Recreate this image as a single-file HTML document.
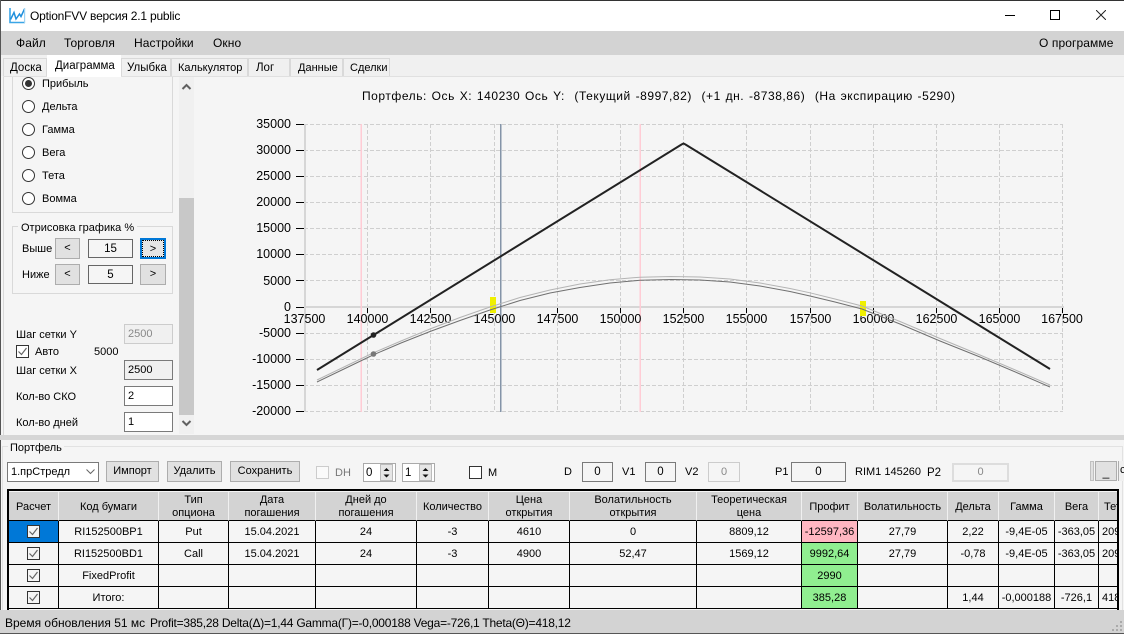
<!DOCTYPE html>
<html><head><meta charset="utf-8"><style>
html,body{margin:0;padding:0;background:#f5f5f5}
#w{position:relative;width:1124px;height:634px;overflow:hidden;background:#f5f5f5;font:11px/14px "Liberation Sans",sans-serif;color:#000}
#w div,#w span{position:absolute;box-sizing:border-box}
.t{white-space:nowrap}
.m{font-size:12px;letter-spacing:.1px}
.tab{top:58px;height:18px;background:#f0f0f0;border:1px solid #d9d9d9;border-bottom:0;line-height:18px;font-size:11.5px;white-space:nowrap}
.r{left:22px;width:13px;height:13px;border:1px solid #333;border-radius:50%;background:#fff}
.b{background:#e1e1e1;border:1px solid #adadad;text-align:center;line-height:18px}
.x{border:1px solid #7a7a7a;background:#f5f5f5;text-align:center;line-height:18px;font-size:11.5px}
.d{border:1px solid #ccc;background:#f0f0f0;color:#888;text-align:center;line-height:18px}
.c{width:13px;height:13px;border:1px solid #333;background:#fff}
table{position:absolute;left:0;top:0;border-collapse:separate;border-spacing:0;table-layout:fixed;width:1150px;font:11px/13px "Liberation Sans",sans-serif}
td{box-sizing:border-box;border-right:1px solid #000;border-bottom:1px solid #000;padding:2px 0 0;text-align:center;height:22px;background:#f5f5f5;white-space:nowrap;overflow:hidden;position:relative}
tr.h td{height:29px;background:#d3d3d3;border-right:1px solid #f0f0f0;border-bottom:1px solid #000;font-size:11px;line-height:13px}
td.g{background:#90ee90}td.p{background:#ffb6c1}td.s{background:#0078d7}
td svg{display:block;margin:-2px auto 0}
</style></head><body><div id="w">

<div style="left:0;top:0;width:1124px;height:31px;background:#fff;border-top:1px solid #333"></div>
<svg style="position:absolute;left:9px;top:7px" width="17" height="17" viewBox="0 0 17 17"><path d="M1 1V15.5H16" fill="none" stroke="#3aa5e6" stroke-width="1.6"/><path d="M1.5 12.5L5 5.5L7 12L10.5 7L12 9.5L15.5 2" fill="none" stroke="#1f8fdc" stroke-width="1.5"/><rect x="15" y="1" width="1.2" height="15" fill="#9fd3f2"/></svg>
<span class="t" style="left:30px;top:9px;font-size:12px;letter-spacing:-.2px">OptionFVV версия 2.1 public</span>
<div style="left:1005px;top:15px;width:10px;height:1px;background:#000"></div>
<div style="left:1050px;top:10px;width:10px;height:10px;border:1px solid #000"></div>
<svg style="position:absolute;left:1096px;top:10px" width="10" height="10"><path d="M0 0L10 10M10 0L0 10" stroke="#222" stroke-width="1"/></svg>

<div style="left:0;top:31px;width:1124px;height:24px;background:#d3d3d3"></div>
<span class="t m" style="left:16px;top:36px">Файл</span>
<span class="t m" style="left:64px;top:36px">Торговля</span>
<span class="t m" style="left:134px;top:36px">Настройки</span>
<span class="t m" style="left:213px;top:36px">Окно</span>
<span class="t m" style="left:1039px;top:36px">О программе</span>

<div style="left:0;top:55px;width:1124px;height:21px;background:#f0f0f0"></div>
<div style="left:3px;top:76px;width:1121px;height:1px;background:#e0e0e0"></div>
<div class="tab" style="left:3px;width:44px;padding-left:6px">Доска</div>
<div class="tab" style="left:121px;width:50px;padding-left:5px">Улыбка</div>
<div class="tab" style="left:171px;width:77px;padding-left:6px;font-size:11px">Калькулятор</div>
<div class="tab" style="left:248px;width:42px;padding-left:7px">Лог</div>
<div class="tab" style="left:290px;width:53px;padding-left:7px;font-size:11px">Данные</div>
<div class="tab" style="left:343px;width:47px;padding-left:6px;font-size:11px">Сделки</div>
<div class="tab" style="left:47px;top:55px;width:74px;height:22px;background:#fff;border:0;line-height:22px;padding-left:8px">Диаграмма</div>

<div style="left:0;top:0;width:1px;height:634px;background:#555"></div>
<div style="left:3px;top:77px;width:1px;height:358px;background:#d9d9d9"></div>
<div style="left:12px;top:77px;width:161px;height:136px;border:1px solid #d9d9d9;border-top:0"></div>

<div class="r" style="top:77px"></div><div style="left:25px;top:80px;width:7px;height:7px;border-radius:50%;background:#333"></div>
<span class="t" style="left:42px;top:77px">Прибыль</span>
<div class="r" style="top:100px"></div><span class="t" style="left:42px;top:100px">Дельта</span>
<div class="r" style="top:123px"></div><span class="t" style="left:42px;top:123px">Гамма</span>
<div class="r" style="top:146px"></div><span class="t" style="left:42px;top:146px">Вега</span>
<div class="r" style="top:169px"></div><span class="t" style="left:42px;top:169px">Тета</span>
<div class="r" style="top:192px"></div><span class="t" style="left:42px;top:192px">Вомма</span>

<div style="left:12px;top:226px;width:161px;height:68px;border:1px solid #d9d9d9"></div>
<span class="t" style="left:18px;top:221px;background:#f5f5f5;padding:0 3px">Отрисовка графика %</span>
<span class="t" style="left:22px;top:242px">Выше</span>
<div class="b" style="left:55px;top:238px;width:25px;height:21px">&lt;</div>
<div class="x" style="left:88px;top:239px;width:45px;height:19px;border-color:#666">15</div>
<div class="b" style="left:140px;top:238px;width:26px;height:21px;border:2px solid #0078d7;background:#e5e5e5;line-height:17px"><span style="left:0;top:0;right:0;bottom:0;border:1px dotted #000">&gt;</span></div>
<span class="t" style="left:22px;top:268px">Ниже</span>
<div class="b" style="left:55px;top:264px;width:25px;height:21px">&lt;</div>
<div class="x" style="left:88px;top:265px;width:45px;height:19px;border-color:#666">5</div>
<div class="b" style="left:140px;top:264px;width:26px;height:21px">&gt;</div>

<span class="t" style="left:16px;top:328px">Шаг сетки Y</span>
<div class="d" style="left:124px;top:324px;width:49px;height:20px;text-align:left;padding-left:3px">2500</div>
<div class="c" style="left:16px;top:345px"></div>
<svg style="position:absolute;left:16px;top:345px" width="13" height="13"><path d="M2.5 6.5L5.5 9.5L10.5 3" fill="none" stroke="#666" stroke-width="1.2"/></svg>
<span class="t" style="left:35px;top:345px">Авто</span>
<span class="t" style="left:94px;top:345px">5000</span>
<span class="t" style="left:16px;top:364px">Шаг сетки X</span>
<div class="x" style="left:124px;top:360px;width:49px;height:20px;background:#f0f0f0;text-align:left;padding-left:3px;font-size:11px">2500</div>
<span class="t" style="left:16px;top:390px">Кол-во СКО</span>
<div class="x" style="left:124px;top:386px;width:49px;height:20px;background:#fff;text-align:left;padding-left:3px;font-size:11px">2</div>
<span class="t" style="left:16px;top:416px">Кол-во дней</span>
<div class="x" style="left:124px;top:412px;width:49px;height:20px;background:#fff;text-align:left;padding-left:3px;font-size:11px">1</div>

<div style="left:179px;top:77px;width:15px;height:357px;background:#f0f0f0"></div>
<div style="left:179px;top:198px;width:15px;height:217px;background:#c8c8c8"></div>
<svg style="position:absolute;left:179px;top:80px" width="15" height="350"><path d="M3.5 9L7.5 5L11.5 9" fill="none" stroke="#606060" stroke-width="2"/><path d="M3.5 341L7.5 345L11.5 341" fill="none" stroke="#606060" stroke-width="2"/></svg>

<svg style="position:absolute;left:194px;top:77px" width="930" height="357" viewBox="194 77 930 357" font-family="Liberation Sans" font-size="12.5">
<g stroke="#cfcfcf" stroke-width="1" stroke-dasharray="4 2" fill="none">
<path d="M304 124.5H1063M304 150.5H1063M304 176.5H1063M304 202.5H1063M304 228.5H1063M304 254.5H1063M304 280.5H1063M304 333.5H1063M304 359.5H1063M304 385.5H1063M304 411.5H1063"/>
<path d="M367.5 124V411M430.5 124V411M494.5 124V411M557.5 124V411M620.5 124V411M683.5 124V411M746.5 124V411M810.5 124V411M873.5 124V411M936.5 124V411M999.5 124V411M1062.5 124V411"/>
</g>
<rect x="304" y="124" width="2" height="288" fill="#d6d6d6"/>
<rect x="304" y="306" width="760" height="2" fill="#d6d6d6"/>
<g stroke="#000" stroke-width="1"><path d="M296 124.5H304M296 150.5H304M296 176.5H304M296 202.5H304M296 228.5H304M296 254.5H304M296 280.5H304M296 307.5H304M296 333.5H304M296 359.5H304M296 385.5H304M296 411.5H304"/>
<path d="M367.5 308V313M430.5 308V313M494.5 308V313M557.5 308V313M620.5 308V313M683.5 308V313M746.5 308V313M810.5 308V313M873.5 308V313M936.5 308V313M999.5 308V313M1062.5 308V313"/></g>
<rect x="360.5" y="124" width="1.5" height="288" fill="#ffccd5"/>
<rect x="639.5" y="124" width="1.5" height="288" fill="#ffccd5"/>
<rect x="500" y="124" width="1.5" height="288" fill="#8494a8"/>
<g text-anchor="end"><text x="291" y="128">35000</text><text x="291" y="154">30000</text><text x="291" y="180">25000</text><text x="291" y="206">20000</text><text x="291" y="232">15000</text><text x="291" y="258">10000</text><text x="291" y="285">5000</text><text x="291" y="311">0</text><text x="291" y="337">-5000</text><text x="291" y="363">-10000</text><text x="291" y="389">-15000</text><text x="291" y="415">-20000</text></g>
<g text-anchor="middle"><text x="304.5" y="323">137500</text><text x="367.5" y="323">140000</text><text x="430.5" y="323">142500</text><text x="494.5" y="323">145000</text><text x="557.5" y="323">147500</text><text x="620.5" y="323">150000</text><text x="683.5" y="323">152500</text><text x="746.5" y="323">155000</text><text x="810.5" y="323">157500</text><text x="873.5" y="323">160000</text><text x="936.5" y="323">162500</text><text x="999.5" y="323">165000</text><text x="1062" y="323">167500</text></g>
<rect x="490" y="297" width="6" height="16" fill="#f0f000"/>
<rect x="860" y="301" width="6" height="15" fill="#f0f000"/>
<polyline fill="none" stroke="#b4b4b4" stroke-width="1" points="317,380 345,366.5 373,353 401,341 430,329 460,317.5 490,307 520,297.5 550,290 580,284 610,279.7 640,277.2 671,276.5 700,277 730,279 760,283 790,288.5 810,292.8 835,299 862,306 900,321.5 940,338.5 980,355 1020,372 1050,385"/>
<polyline fill="none" stroke="#707070" stroke-width="1" points="317,382 345,368.5 373,355 401,343 430,331.5 460,320.5 490,310 520,300.5 550,293 580,287.5 610,283 640,280.3 671,279.5 700,280 730,282 760,286 790,291.5 810,296 835,302 862,309 900,324 940,341 980,357 1020,374 1050,387"/>
<polyline fill="none" stroke="#222" stroke-width="2" points="317,370 681.5,144.5 683.5,143.5 685.5,144.5 1050,369"/>
<circle cx="373.5" cy="335" r="2.8" fill="#222"/>
<circle cx="373.5" cy="354" r="2.8" fill="#777"/>
</svg>
<span class="t" style="left:362px;top:89px;font-size:12px;letter-spacing:.55px;word-spacing:.9px;white-space:pre">Портфель: Ось X: 140230 Ось Y:  (Текущий -8997,82)  (+1 дн. -8738,86)  (На экспирацию -5290)</span>

<div style="left:0;top:435px;width:1124px;height:5px;background:#d6d6d6"></div>
<div style="left:2px;top:446px;width:1121px;height:170px;border:1px solid #e2e2e2;border-bottom:0"></div>
<span class="t" style="left:8px;top:441px;background:#f5f5f5;padding:0 2px">Портфель</span>

<div style="left:7px;top:462px;width:92px;height:20px;border:1px solid #7a7a7a;background:#fff;line-height:18px;padding-left:3px">1.прСтредл</div>
<svg style="position:absolute;left:86px;top:469px" width="9" height="6"><path d="M0.5 0.5L4.5 4.5L8.5 0.5" fill="none" stroke="#666"/></svg>
<div class="b" style="left:106px;top:461px;width:53px;height:21px">Импорт</div>
<div class="b" style="left:167px;top:461px;width:55px;height:21px">Удалить</div>
<div class="b" style="left:230px;top:461px;width:70px;height:21px">Сохранить</div>
<div class="c" style="left:316px;top:466px;border-color:#ccc;background:#fafafa"></div>
<span class="t" style="left:335px;top:466px;color:#777">DH</span>
<div class="x" style="left:363px;top:463px;width:33px;height:19px;background:#fff;border-color:#aaa;text-align:left;padding-left:2px">0</div>
<div style="left:380px;top:464px;width:13px;height:17px;background:#e6e6e6;border:1px solid #bbb"></div>
<svg style="position:absolute;left:380px;top:464px" width="13" height="17"><path d="M3.5 7H9.5L6.5 4ZM3.5 10.5H9.5L6.5 13.5Z" fill="#111"/></svg>
<div class="x" style="left:402px;top:463px;width:33px;height:19px;background:#fff;border-color:#aaa;text-align:left;padding-left:2px">1</div>
<div style="left:419px;top:464px;width:13px;height:17px;background:#e6e6e6;border:1px solid #bbb"></div>
<svg style="position:absolute;left:419px;top:464px" width="13" height="17"><path d="M3.5 7H9.5L6.5 4ZM3.5 10.5H9.5L6.5 13.5Z" fill="#111"/></svg>
<div class="c" style="left:469px;top:466px"></div>
<span class="t" style="left:488px;top:466px">M</span>
<span class="t" style="left:564px;top:465px">D</span>
<div class="x" style="left:582px;top:462px;width:31px;height:20px">0</div>
<span class="t" style="left:622px;top:465px">V1</span>
<div class="x" style="left:645px;top:462px;width:31px;height:20px">0</div>
<span class="t" style="left:685px;top:465px">V2</span>
<div class="d" style="left:708px;top:462px;width:32px;height:20px;background:#f5f5f5">0</div>
<span class="t" style="left:775px;top:465px">P1</span>
<div class="x" style="left:791px;top:462px;width:55px;height:20px">0</div>
<span class="t" style="left:855px;top:465px">RIM1 145260</span>
<span class="t" style="left:927px;top:466px;font-size:11.5px">P2</span>
<div class="d" style="left:952px;top:463px;width:57px;height:19px;background:#f5f5f5;border-width:2px;border-color:#ddd;line-height:15px">0</div>
<div style="left:1090px;top:461px;width:4px;height:20px;background:#e1e1e1;border:1px solid #c0c0c0"></div>
<div class="b" style="left:1095px;top:461px;width:22px;height:20px;line-height:20px;font-size:12px">_</div>
<div style="left:1118px;top:461px;width:6px;height:20px;background:#f0f0f0;border-left:1px solid #adadad;overflow:hidden;line-height:18px;padding-left:1px">с</div>

<div style="left:7px;top:489px;width:1112px;height:121px;background:#f5f5f5;border:2px solid #000;border-bottom:0;overflow:hidden">
<div style="left:0;top:1px;width:1108px;height:119px;overflow:hidden">
<table>
<colgroup><col style="width:50px"><col style="width:100px"><col style="width:70px"><col style="width:87px"><col style="width:101px"><col style="width:72px"><col style="width:81px"><col style="width:127px"><col style="width:105px"><col style="width:56px"><col style="width:90px"><col style="width:51px"><col style="width:56px"><col style="width:44px"><col style="width:60px"></colgroup>
<tr class="h"><td>Расчет</td><td>Код бумаги</td><td>Тип<br>опциона</td><td>Дата<br>погашения</td><td>Дней до<br>погашения</td><td>Количество</td><td>Цена<br>открытия</td><td>Волатильность<br>открытия</td><td>Теоретическая<br>цена</td><td>Профит</td><td>Волатильность</td><td>Дельта</td><td>Гамма</td><td>Вега</td><td style="text-align:left;padding-left:5px">Тета</td></tr>
<tr><td class="s"><svg width="13" height="13"><rect x=".5" y=".5" width="12" height="12" fill="#f5f5f5" stroke="#333"/><path d="M2.5 6.5L5.5 9.5L10.5 3" fill="none" stroke="#666" stroke-width="1.2"/></svg></td><td>RI152500BP1</td><td>Put</td><td>15.04.2021</td><td>24</td><td>-3</td><td>4610</td><td>0</td><td>8809,12</td><td class="p">-12597,36</td><td>27,79</td><td>2,22</td><td>-9,4E-05</td><td>-363,05</td><td style="text-align:left;padding-left:3px">209,06</td></tr>
<tr><td><svg width="13" height="13"><rect x=".5" y=".5" width="12" height="12" fill="#f5f5f5" stroke="#333"/><path d="M2.5 6.5L5.5 9.5L10.5 3" fill="none" stroke="#666" stroke-width="1.2"/></svg></td><td>RI152500BD1</td><td>Call</td><td>15.04.2021</td><td>24</td><td>-3</td><td>4900</td><td>52,47</td><td>1569,12</td><td class="g">9992,64</td><td>27,79</td><td>-0,78</td><td>-9,4E-05</td><td>-363,05</td><td style="text-align:left;padding-left:3px">209,06</td></tr>
<tr><td><svg width="13" height="13"><rect x=".5" y=".5" width="12" height="12" fill="#f5f5f5" stroke="#333"/><path d="M2.5 6.5L5.5 9.5L10.5 3" fill="none" stroke="#666" stroke-width="1.2"/></svg></td><td>FixedProfit</td><td></td><td></td><td></td><td></td><td></td><td></td><td></td><td class="g">2990</td><td></td><td></td><td></td><td></td><td></td></tr>
<tr><td><svg width="13" height="13"><rect x=".5" y=".5" width="12" height="12" fill="#f5f5f5" stroke="#333"/><path d="M2.5 6.5L5.5 9.5L10.5 3" fill="none" stroke="#666" stroke-width="1.2"/></svg></td><td>Итого:</td><td></td><td></td><td></td><td></td><td></td><td></td><td></td><td class="g">385,28</td><td></td><td>1,44</td><td>-0,000188</td><td>-726,1</td><td style="text-align:left;padding-left:3px">418,12</td></tr>
</table>
</div></div>

<div style="left:0;top:610px;width:1124px;height:23px;background:#d3d3d3"></div>
<div style="left:0;top:633px;width:1124px;height:1px;background:#555"></div>
<span class="t" style="left:5px;top:616px;font-size:12px">Время обновления 51 мс</span>
<span class="t" style="left:150px;top:616px;font-size:12px;letter-spacing:-.23px">Profit=385,28 Delta(Δ)=1,44 Gamma(Γ)=-0,000188 Vega=-726,1 Theta(Θ)=418,12</span>
<svg style="position:absolute;left:1111px;top:620px" width="12" height="12" fill="#aaa"><rect x="9" y="1" width="2" height="2"/><rect x="5" y="5" width="2" height="2"/><rect x="9" y="5" width="2" height="2"/><rect x="1" y="9" width="2" height="2"/><rect x="5" y="9" width="2" height="2"/><rect x="9" y="9" width="2" height="2"/></svg>
</div></body></html>
